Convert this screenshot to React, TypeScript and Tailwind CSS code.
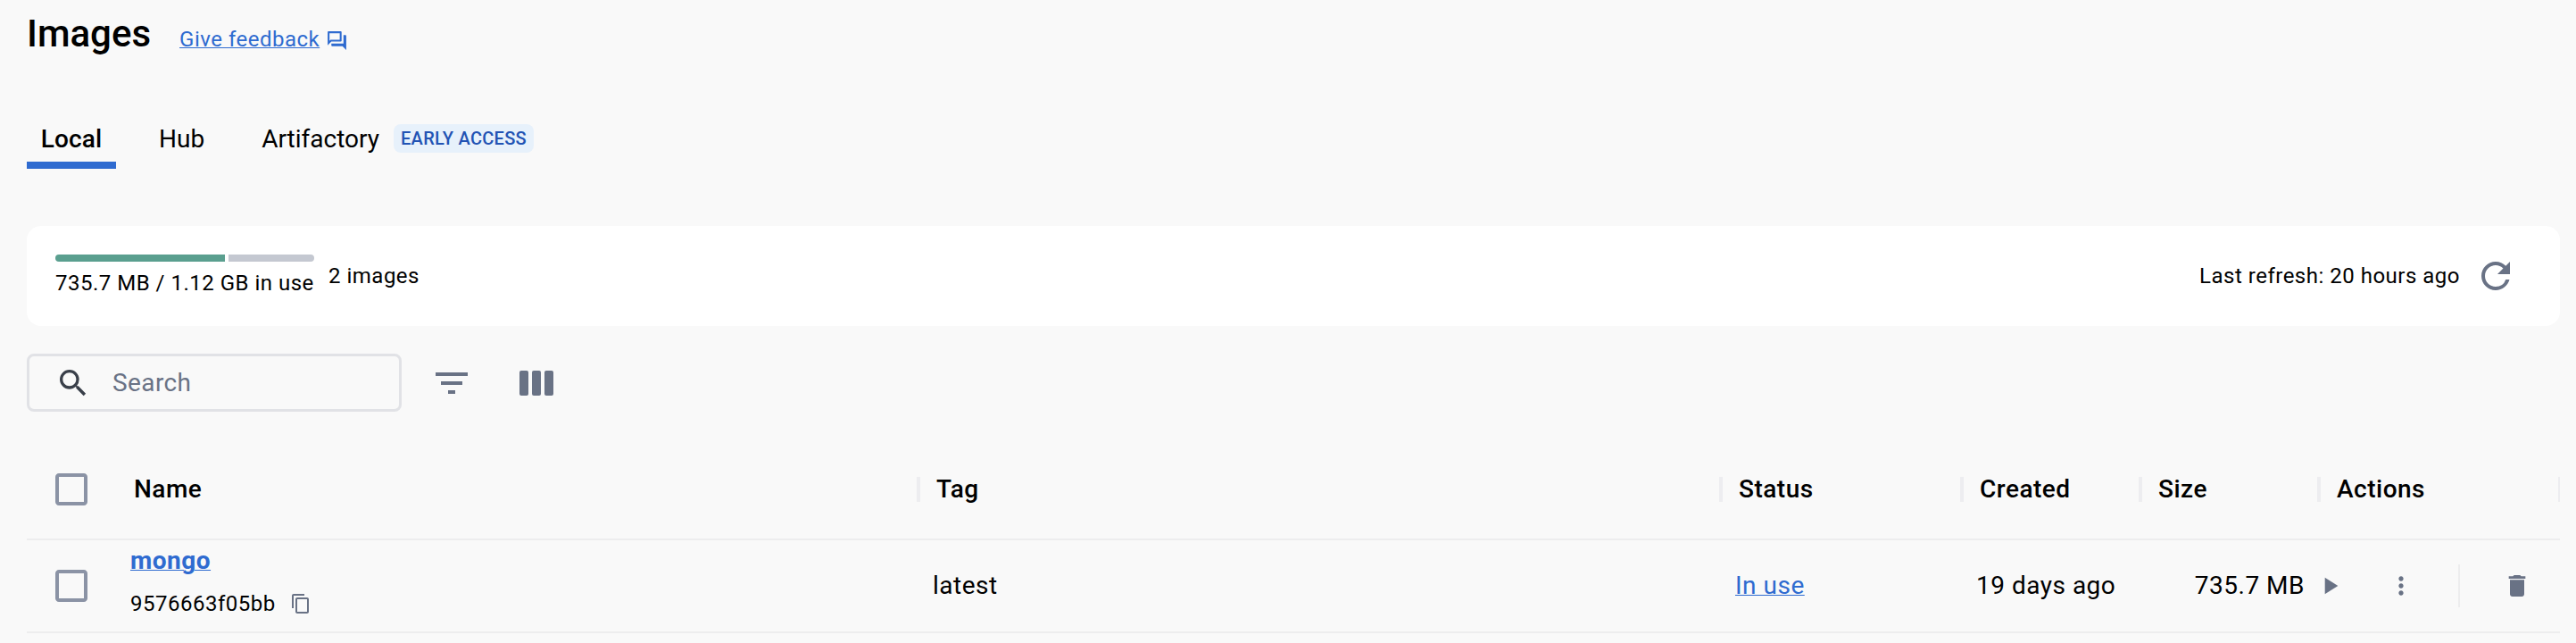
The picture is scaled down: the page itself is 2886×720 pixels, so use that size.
import React from "react";
import {
  MdCheckBoxOutlineBlank,
  MdContentCopy,
  MdDelete,
  MdFilterList,
  MdMoreVert,
  MdOutlineQuestionAnswer,
  MdPlayArrow,
  MdRefresh,
  MdSearch,
} from "react-icons/md";

function ColumnsIcon() {
  return (
    <svg className="ml-[52px] h-[28px] w-[38px] fill-[#697285]" viewBox="0 0 38 28">
      <rect x="0" y="0" width="10" height="28" rx="2" />
      <rect x="14" y="0" width="10" height="28" rx="2" />
      <rect x="28" y="0" width="10" height="28" rx="2" />
    </svg>
  );
}

function HeaderCell({ label, className }: { label: string; className: string }) {
  return (
    <div className={`flex items-center ${className}`}>
      <span className="h-7 flex-1 text-[28px] leading-7 font-medium tracking-[0.5px]">{label}</span>
      <span className="h-7 w-1 bg-[#ededf0]" />
    </div>
  );
}

export default function App() {
  return (
    <div className="h-[720px] w-[2886px] overflow-hidden bg-[#f9f9f9] pr-[18px] pl-[30px] font-['Roboto',sans-serif] text-black">
      <header className="flex h-[74px] items-start">
        <h1 className="mt-[13px] text-[42px] leading-[49px] font-medium">Images</h1>
        <a className="mt-[30px] ml-[32px] text-2xl leading-7 tracking-[0.5px] text-[#2f6bd0] underline decoration-1 underline-offset-1">
          Give feedback
        </a>
        <MdOutlineQuestionAnswer className="mt-[33px] ml-[7px] size-[25px] text-[#2f6bd0]" />
      </header>

      <nav className="mt-[57px] flex h-[58px] items-start text-[28px] leading-[50px]">
        <div className="flex h-[58px] w-[100px] flex-col items-center justify-between">
          <span className="font-medium tracking-[0.1px]">Local</span>
          <span className="h-2 w-[100px] bg-[#2f6bd0]" />
        </div>
        <span className="ml-[48px]">Hub</span>
        <span className="ml-[64px]">Artifactory</span>
        <span className="mt-2 ml-4 flex h-8 w-[157px] items-center justify-center rounded-lg bg-[#e7f1fb] text-xl font-medium tracking-[0.3px] text-[#2253b4]">
          EARLY ACCESS
        </span>
      </nav>

      <section className="mt-16 flex h-28 items-center rounded-2xl bg-white pr-12 pl-8 text-2xl leading-7 tracking-[0.5px]">
        <div className="mt-8 w-[290px] self-start">
          <div className="flex gap-1">
            <div className="h-2 w-[190px] rounded-l bg-[#5a9f8f]" />
            <div className="h-2 w-[96px] rounded-r bg-[#c4c8d1]" />
          </div>
          <div className="mt-[10px] whitespace-nowrap">735.7 MB / 1.12 GB in use</div>
        </div>
        <div className="ml-4 flex-1">2 images</div>
        <div>Last refresh: 20 hours ago</div>
        <MdRefresh className="ml-4 size-12 text-[#697285]" />
      </section>

      <section className="mt-[31px] flex h-[65px] items-center">
        <div className="flex h-[65px] w-[420px] items-center rounded-lg border-[3px] border-[#e1e2e6] pl-[29px]">
          <MdSearch className="size-10 text-[#393f49]" />
          <span className="ml-6 text-[28px] leading-8 tracking-[0.4px] text-[#697285]">Search</span>
        </div>
        <MdFilterList className="ml-8 size-12 text-[#697285]" />
        <ColumnsIcon />
      </section>

      <div className="mt-[30px] flex h-[114px] items-center border-b-2 border-[#ededee] pt-0.5">
        <MdCheckBoxOutlineBlank className="ml-[26px] size-12 text-[#8b93a5]" />
        <HeaderCell label="Name" className="ml-[46px] w-[881px]" />
        <HeaderCell label="Tag" className="ml-[18px] w-[881px]" />
        <HeaderCell label="Status" className="ml-[18px] w-[252px]" />
        <HeaderCell label="Created" className="ml-[18px] w-[182px]" />
        <HeaderCell label="Size" className="ml-[18px] w-[182px]" />
        <span className="ml-[18px] flex-1 text-[28px] leading-7 font-medium tracking-[0.5px]">Actions</span>
        <span className="h-7 w-0.5 bg-[#ededf0]" />
      </div>

      <div className="flex h-[104px] items-center border-b-2 border-[#ededee] text-[28px] leading-8 tracking-[0.5px]">
        <MdCheckBoxOutlineBlank className="ml-[26px] size-12 text-[#8b93a5]" />
        <div className="ml-[42px] w-[899px] pb-2">
          <div className="font-bold text-[#2f6bd0] underline decoration-1 underline-offset-1">mongo</div>
          <div className="mt-4 flex items-center text-2xl/8">
            9576663f05bb
            <MdContentCopy className="ml-4 size-6 text-[#697285]" />
          </div>
        </div>
        <div className="w-[899px]">latest</div>
        <div className="w-[270px] text-[#2f6bd0] underline decoration-1 underline-offset-1">In use</div>
        <div className="w-[167px]">19 days ago</div>
        <div className="w-[201px] text-right">735.7 MB</div>
        <MdPlayArrow className="ml-[12px] size-8 text-[#697285]" />
        <MdMoreVert className="ml-12 size-8 text-[#697285]" />
        <span className="ml-12 h-12 w-0.5 bg-[#ededee]" />
        <MdDelete className="ml-12 size-8 text-[#697285]" />
      </div>
    </div>
  );
}
